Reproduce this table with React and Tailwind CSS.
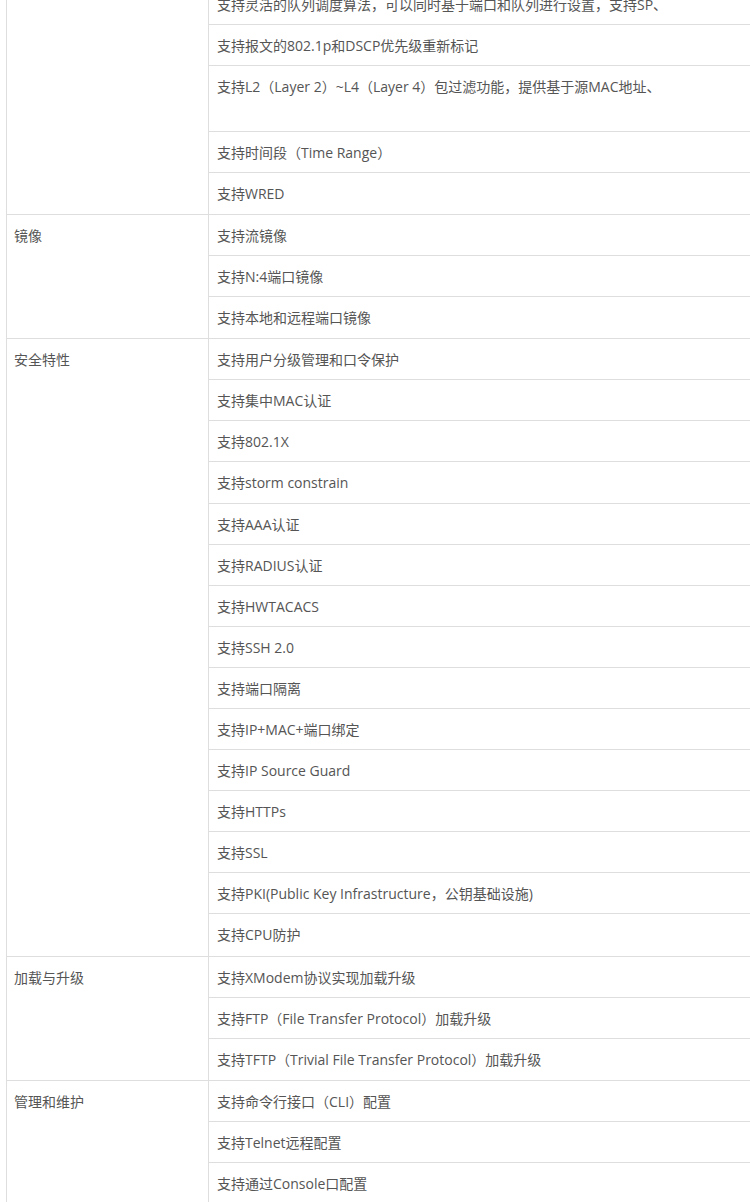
const GROUPS = [
  {
    title: '',
    items: [
      '支持灵活的队列调度算法，可以同时基于端口和队列进行设置，支持SP、',
      '支持报文的802.1p和DSCP优先级重新标记',
      { text: '支持L2（Layer 2）~L4（Layer 4）包过滤功能，提供基于源MAC地址、', tall: true },
      '支持时间段（Time Range）',
      '支持WRED',
    ],
  },
  {
    title: '镜像',
    items: ['支持流镜像', '支持N:4端口镜像', '支持本地和远程端口镜像'],
  },
  {
    title: '安全特性',
    items: [
      '支持用户分级管理和口令保护',
      '支持集中MAC认证',
      '支持802.1X',
      '支持storm constrain',
      '支持AAA认证',
      '支持RADIUS认证',
      '支持HWTACACS',
      '支持SSH 2.0',
      '支持端口隔离',
      '支持IP+MAC+端口绑定',
      '支持IP Source Guard',
      '支持HTTPs',
      '支持SSL',
      '支持PKI(Public Key Infrastructure，公钥基础设施)',
      '支持CPU防护',
    ],
  },
  {
    title: '加载与升级',
    items: [
      '支持XModem协议实现加载升级',
      '支持FTP（File Transfer Protocol）加载升级',
      '支持TFTP（Trivial File Transfer Protocol）加载升级',
    ],
  },
  {
    title: '管理和维护',
    items: ['支持命令行接口（CLI）配置', '支持Telnet远程配置', '支持通过Console口配置'],
  },
]

function FeatureRow({ item }) {
  const text = typeof item === 'string' ? item : item.text
  const tall = typeof item !== 'string' && item.tall
  return (
    <div
      className={`border-b border-[#dedede] pl-2 pt-[12px] whitespace-nowrap leading-[17px] ${
        tall ? 'h-[65.5px]' : 'h-[41.1px]'
      }`}
    >
      {text}
    </div>
  )
}

export default function App() {
  return (
    <div className="w-[750px] h-[1202px] overflow-hidden bg-white">
      <div
        className="-mt-[16px] ml-[6px] w-[780px] border-l border-[#dedede] text-[14px] text-[#555]"
        style={{ fontFamily: '"Open Sans", "Noto Sans CJK SC", sans-serif' }}
      >
        {GROUPS.map((group, i) => (
          <div key={i} className="flex border-b border-[#dedede]">
            {/* Category */}
            <div className="w-[202px] flex-shrink-0 border-r border-[#dedede] pl-[7px] pt-[12px] leading-[17px]">
              {group.title}
            </div>
            {/* Features */}
            <div className="flex-1 [&>div:last-child]:border-b-0">
              {group.items.map((item, j) => (
                <FeatureRow key={j} item={item} />
              ))}
            </div>
          </div>
        ))}
      </div>
    </div>
  )
}
